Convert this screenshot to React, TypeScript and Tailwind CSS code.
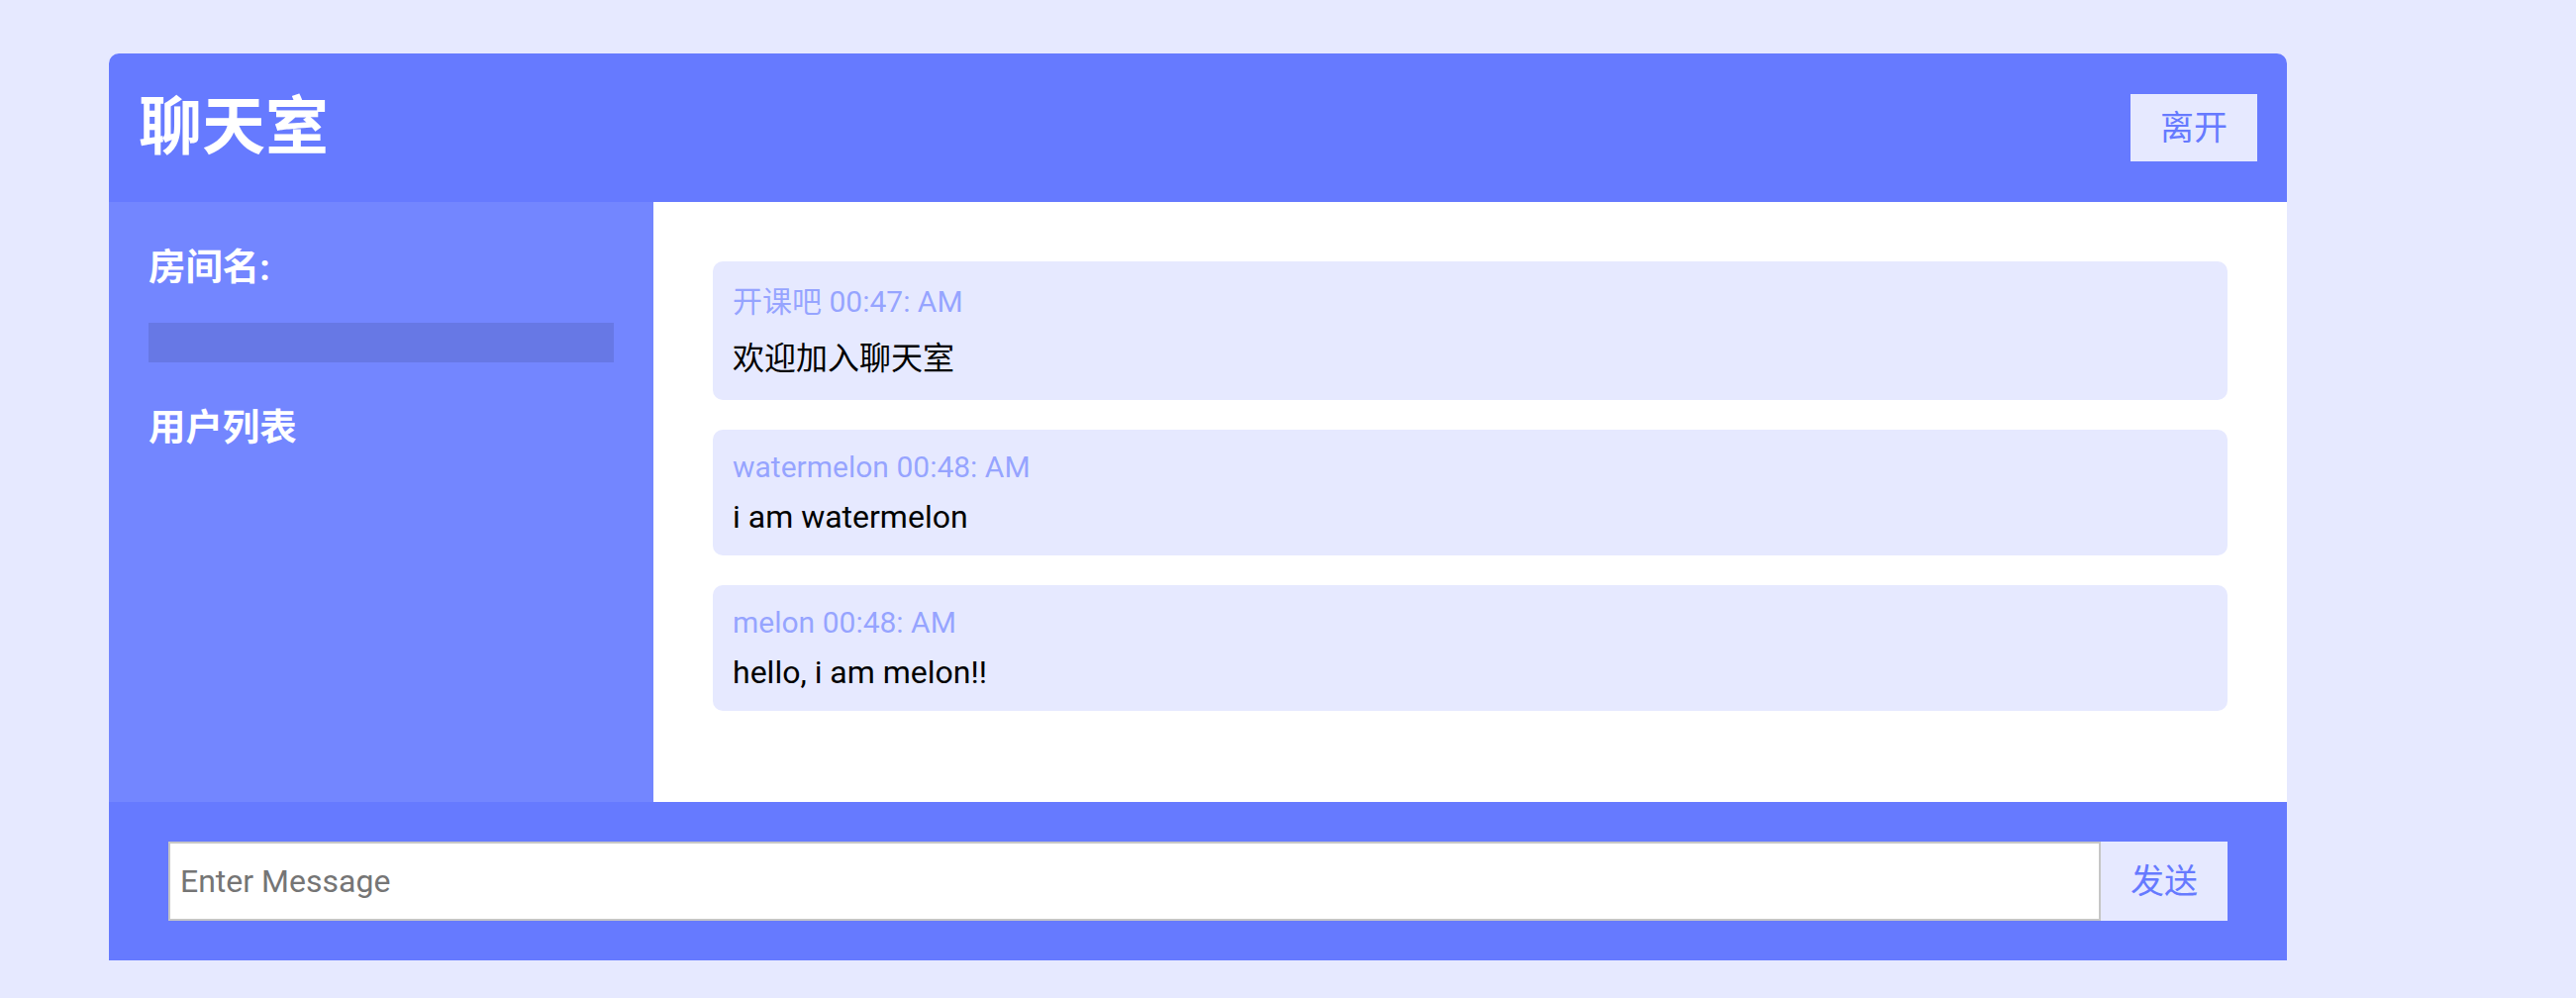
const messages = [
  { user: "开课吧", time: "00:47: AM", text: "欢迎加入聊天室", cjk: true },
  { user: "watermelon", time: "00:48: AM", text: "i am watermelon", cjk: false },
  { user: "melon", time: "00:48: AM", text: "hello, i am melon!!", cjk: false },
];

export default function App() {
  return (
    <div className="min-h-screen bg-[#e6e9ff] pt-[54px] pl-[110px] font-[Roboto,'Noto_Sans_CJK_SC',sans-serif]">
      <div className="w-[2200px] overflow-hidden rounded-t-[10px] bg-white">
        <header className="flex items-center justify-between bg-[#667aff] p-[30px] text-white">
          <h1 className="text-[64px] font-bold leading-[90px]">聊天室</h1>
          <button className="bg-[#e6e9ff] px-[30px] py-[10px] text-[34px] leading-[48px] text-[#667aff]">
            离开
          </button>
        </header>

        <main className="grid h-[606px] grid-cols-[550px_1fr]">
          <aside className="bg-[#7386ff] px-[40px] pt-[40px] text-white">
            <h3 className="mb-[30px] text-[37.44px] font-bold leading-[52px]">房间名:</h3>
            <h2 className="mb-[40px] h-[40px] bg-black/10"></h2>
            <h3 className="text-[37.44px] font-bold leading-[52px]">用户列表</h3>
            <ul></ul>
          </aside>

          <section className="flex flex-col gap-[30px] p-[60px]">
            {messages.map((m, i) => (
              <div key={i} className="rounded-[10px] bg-[#e6e9ff] p-[20px]">
                <p
                  className={
                    m.cjk
                      ? "mb-[14px] text-[30px] leading-[42px] text-[#7386ff]/70"
                      : "mb-[14px] text-[30px] leading-[35px] text-[#7386ff]/70"
                  }
                >
                  {m.user} <span>{m.time}</span>
                </p>
                <p
                  className={
                    m.cjk
                      ? "text-[32px] leading-[44px] text-black"
                      : "text-[32px] leading-[38px] text-black"
                  }
                >
                  {m.text}
                </p>
              </div>
            ))}
          </section>
        </main>

        <footer className="bg-[#667aff] px-[60px] py-[40px]">
          <form className="flex" onSubmit={(e) => e.preventDefault()}>
            <input
              type="text"
              placeholder="Enter Message"
              className="h-[80px] flex-1 border-2 border-[#c6c6c6] bg-white px-[10px] text-[32px] placeholder:text-[#757575] outline-none"
            />
            <button className="h-[80px] bg-[#e6e9ff] px-[30px] text-[34px] text-[#667aff]">
              发送
            </button>
          </form>
        </footer>
      </div>
    </div>
  );
}
